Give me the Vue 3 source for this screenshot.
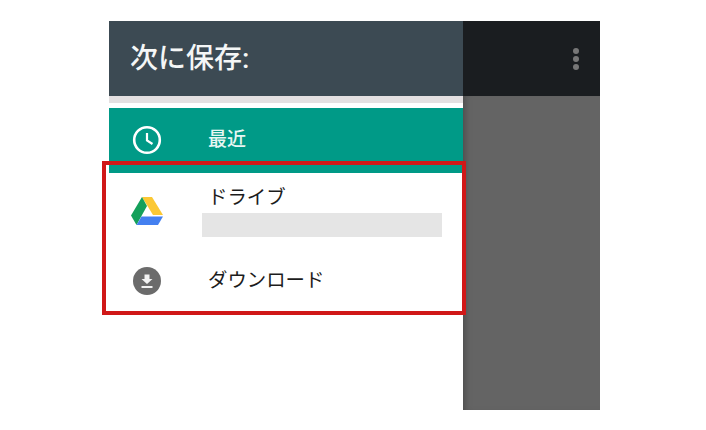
<template>
  <div class="page">
    <div class="phone">
      <div class="drawer">
        <div class="drawer-head">次に保存:</div>
        <div class="head-line"></div>
        <div class="row recent">
          <span class="icon-col">
            <svg width="30" height="30" viewBox="0 0 30 30">
              <circle cx="15" cy="15" r="12.8" fill="none" stroke="#fff" stroke-width="2.6" />
              <path d="M15 8v7.500l5.500 3.500" fill="none" stroke="#fff" stroke-width="2.200" />
            </svg>
          </span>
          <span class="label label-recent">最近</span>
        </div>
        <div class="row drive">
          <span class="icon-col">
            <svg width="34" height="30" viewBox="0 0 34 30">
              <path d="M12 1h10l11 18h-10z" fill="#fbc834" />
              <path d="M12 1l5 9-10.500 19L1 19.500z" fill="#14a05a" />
              <path d="M11.500 20.500H33l-5 8.500H6.500z" fill="#4480f0" />
            </svg>
          </span>
          <div class="drive-text">
            <span class="label">ドライブ</span>
            <div class="account"></div>
          </div>
        </div>
        <div class="row download">
          <span class="icon-col">
            <svg width="28" height="28" viewBox="0 0 28 28">
              <circle cx="14" cy="14" r="14" fill="#6b6b6b" />
              <path d="M11.500 7.500h5v4.500h3L14 17l-5.500-5h3z" fill="#f2f2f2" />
              <path d="M8.500 19h11v2h-11z" fill="#f2f2f2" />
            </svg>
          </span>
          <span class="label">ダウンロード</span>
        </div>
      </div>
      <div class="side">
        <div class="side-bar">
          <span class="dots"><i></i><i></i><i></i></span>
        </div>
        <div class="scrim"></div>
      </div>
    </div>
    <div class="highlight"></div>
  </div>
</template>

<script setup>
</script>

<style>
html, body {
  margin: 0;
  background: #fff;
}
</style>

<style scoped>
.page {
  position: relative;
  width: 706px;
  height: 430px;
  padding: 21px 0 0 109px;
  box-sizing: border-box;
  overflow: hidden;
  background: #fff;
  font-family: "Roboto", "Noto Sans CJK JP", sans-serif;
}

.phone {
  display: flex;
  width: 491px;
  height: 389px;
}

.drawer {
  width: 354px;
  flex: none;
  background: #fff;
}

.drawer-head {
  height: 75px;
  padding-left: 21px;
  box-sizing: border-box;
  background: #3c4a53;
  color: #f4f6f6;
  font-size: 28px;
  font-weight: 500;
  line-height: 75px;
}

.head-line {
  height: 12px;
  box-sizing: border-box;
  border-top: 7px solid #e4e0e1;
}

.row {
  display: flex;
  align-items: center;
}

.icon-col {
  width: 76px;
  flex: none;
  display: flex;
  justify-content: center;
}

.label {
  padding-left: 23px;
  color: #1c1c1c;
  font-size: 19.4px;
  line-height: 24px;
}

.recent {
  height: 65px;
  background: #009a87;
  box-sizing: border-box;
  align-items: flex-start;
  padding-top: 17px;
}

.label-recent {
  color: #e8f6f3;
  font-size: 19px;
  font-weight: 500;
  line-height: 30px;
}

.drive {
  height: 77px;
  align-items: flex-start;
  padding-top: 13px;
  box-sizing: border-box;
}

.drive .icon-col {
  padding-top: 10px;
}

.drive-text {
  flex: 1;
}

.account {
  width: 240px;
  height: 24px;
  margin: 3px 0 0 17px;
  background: #e5e5e5;
}

.download {
  height: 62px;
}

.side {
  flex: 1;
  display: flex;
  flex-direction: column;
}

.side-bar {
  height: 75px;
  flex: none;
  display: flex;
  align-items: center;
  justify-content: flex-end;
  padding-right: 21px;
  background: #1a1d20;
}

.dots {
  display: flex;
  flex-direction: column;
  gap: 2px;
}

.dots i {
  width: 6px;
  height: 6px;
  border-radius: 50%;
  background: #777;
}

.scrim {
  flex: 1;
  background: #646464;
  box-shadow: inset 6px 0 6px -4px #4c4c4c;
}

.highlight {
  position: absolute;
  left: 102px;
  top: 161px;
  width: 364px;
  height: 154px;
  box-sizing: border-box;
  border: 4px solid #d01818;
}
</style>
